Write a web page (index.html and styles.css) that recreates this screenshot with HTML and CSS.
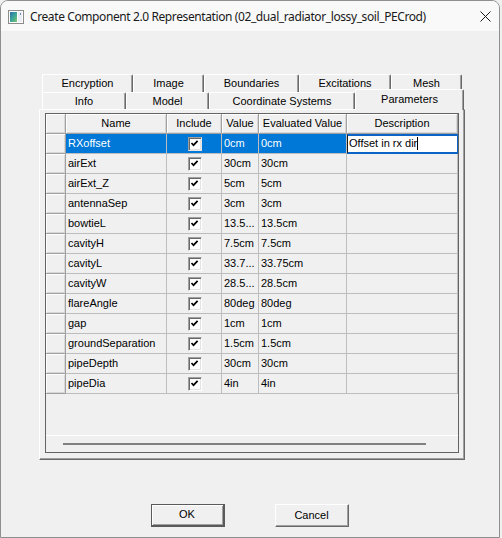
FILE: index.html
```html
<!DOCTYPE html>
<html>
<head>
<meta charset="utf-8">
<link rel="stylesheet" href="styles.css">
</head>
<body>
<div class="window">
  <div class="titlebar">
    <svg class="appicon" width="16" height="14" viewBox="0 0 16 14">
      <defs>
        <linearGradient id="g" x1="0" y1="0" x2="1" y2="1">
          <stop offset="0" stop-color="#2a6fb0"/>
          <stop offset="0.5" stop-color="#3aa59a"/>
          <stop offset="1" stop-color="#7cc46a"/>
        </linearGradient>
      </defs>
      <rect x="0.5" y="0.5" width="15" height="13" fill="#fff" stroke="#8c8c8c"/>
      <rect x="2" y="2" width="7" height="10" fill="url(#g)"/>
      <rect x="10" y="2" width="4" height="10" fill="#e8eef4"/>
      <rect x="12" y="3" width="1" height="2" fill="#6a8fb8"/>
    </svg>
    <span class="title">Create Component 2.0 Representation (02_dual_radiator_lossy_soil_PECrod)</span>
    <svg class="close" width="11" height="11" viewBox="0 0 11 11">
      <path d="M0.5 0.5 L10.5 10.5 M10.5 0.5 L0.5 10.5" stroke="#1a1a1a" stroke-width="1" fill="none"/>
    </svg>
  </div>
  <div class="client">
    <div class="tabctl">
      <div class="tabrow row1">
        <div class="tab w-enc">Encryption</div>
        <div class="tab w-img">Image</div>
        <div class="tab w-bnd">Boundaries</div>
        <div class="tab w-exc">Excitations</div>
        <div class="tab w-mesh">Mesh</div>
      </div>
      <div class="tabrow row2">
        <div class="tab w-info">Info</div>
        <div class="tab w-model">Model</div>
        <div class="tab w-coord">Coordinate Systems</div>
        <div class="tab w-par selected">Parameters</div>
      </div>
      <div class="panel">
        <div class="grid">
          <div class="table">
            <div class="c hd"></div>
            <div class="c hd ctr">Name</div>
            <div class="c hd ctr">Include</div>
            <div class="c hd ctr">Value</div>
            <div class="c hd ctr">Evaluated Value</div>
            <div class="c hd ctr">Description</div>

            <div class="c hd"></div>
            <div class="c sel">RXoffset</div>
            <div class="c sel chk"><span class="cb"><svg width="9" height="9" viewBox="0 0 9 9"><path d="M1.5 4 L3.5 6.2 L7.6 1.8" stroke="#000" stroke-width="1.7" fill="none"/></svg></span></div>
            <div class="c sel">0cm</div>
            <div class="c sel">0cm</div>
            <div class="c edit">Offset in rx dir<span class="caret"></span></div>

            <div class="c hd"></div><div class="c">airExt</div><div class="c chk"><span class="cb"><svg width="9" height="9" viewBox="0 0 9 9"><path d="M1.5 4 L3.5 6.2 L7.6 1.8" stroke="#000" stroke-width="1.7" fill="none"/></svg></span></div><div class="c">30cm</div><div class="c">30cm</div><div class="c"></div>
            <div class="c hd"></div><div class="c">airExt_Z</div><div class="c chk"><span class="cb"><svg width="9" height="9" viewBox="0 0 9 9"><path d="M1.5 4 L3.5 6.2 L7.6 1.8" stroke="#000" stroke-width="1.7" fill="none"/></svg></span></div><div class="c">5cm</div><div class="c">5cm</div><div class="c"></div>
            <div class="c hd"></div><div class="c">antennaSep</div><div class="c chk"><span class="cb"><svg width="9" height="9" viewBox="0 0 9 9"><path d="M1.5 4 L3.5 6.2 L7.6 1.8" stroke="#000" stroke-width="1.7" fill="none"/></svg></span></div><div class="c">3cm</div><div class="c">3cm</div><div class="c"></div>
            <div class="c hd"></div><div class="c">bowtieL</div><div class="c chk"><span class="cb"><svg width="9" height="9" viewBox="0 0 9 9"><path d="M1.5 4 L3.5 6.2 L7.6 1.8" stroke="#000" stroke-width="1.7" fill="none"/></svg></span></div><div class="c">13.5...</div><div class="c">13.5cm</div><div class="c"></div>
            <div class="c hd"></div><div class="c">cavityH</div><div class="c chk"><span class="cb"><svg width="9" height="9" viewBox="0 0 9 9"><path d="M1.5 4 L3.5 6.2 L7.6 1.8" stroke="#000" stroke-width="1.7" fill="none"/></svg></span></div><div class="c">7.5cm</div><div class="c">7.5cm</div><div class="c"></div>
            <div class="c hd"></div><div class="c">cavityL</div><div class="c chk"><span class="cb"><svg width="9" height="9" viewBox="0 0 9 9"><path d="M1.5 4 L3.5 6.2 L7.6 1.8" stroke="#000" stroke-width="1.7" fill="none"/></svg></span></div><div class="c">33.7...</div><div class="c">33.75cm</div><div class="c"></div>
            <div class="c hd"></div><div class="c">cavityW</div><div class="c chk"><span class="cb"><svg width="9" height="9" viewBox="0 0 9 9"><path d="M1.5 4 L3.5 6.2 L7.6 1.8" stroke="#000" stroke-width="1.7" fill="none"/></svg></span></div><div class="c">28.5...</div><div class="c">28.5cm</div><div class="c"></div>
            <div class="c hd"></div><div class="c">flareAngle</div><div class="c chk"><span class="cb"><svg width="9" height="9" viewBox="0 0 9 9"><path d="M1.5 4 L3.5 6.2 L7.6 1.8" stroke="#000" stroke-width="1.7" fill="none"/></svg></span></div><div class="c">80deg</div><div class="c">80deg</div><div class="c"></div>
            <div class="c hd"></div><div class="c">gap</div><div class="c chk"><span class="cb"><svg width="9" height="9" viewBox="0 0 9 9"><path d="M1.5 4 L3.5 6.2 L7.6 1.8" stroke="#000" stroke-width="1.7" fill="none"/></svg></span></div><div class="c">1cm</div><div class="c">1cm</div><div class="c"></div>
            <div class="c hd"></div><div class="c">groundSeparation</div><div class="c chk"><span class="cb"><svg width="9" height="9" viewBox="0 0 9 9"><path d="M1.5 4 L3.5 6.2 L7.6 1.8" stroke="#000" stroke-width="1.7" fill="none"/></svg></span></div><div class="c">1.5cm</div><div class="c">1.5cm</div><div class="c"></div>
            <div class="c hd"></div><div class="c">pipeDepth</div><div class="c chk"><span class="cb"><svg width="9" height="9" viewBox="0 0 9 9"><path d="M1.5 4 L3.5 6.2 L7.6 1.8" stroke="#000" stroke-width="1.7" fill="none"/></svg></span></div><div class="c">30cm</div><div class="c">30cm</div><div class="c"></div>
            <div class="c hd"></div><div class="c">pipeDia</div><div class="c chk"><span class="cb"><svg width="9" height="9" viewBox="0 0 9 9"><path d="M1.5 4 L3.5 6.2 L7.6 1.8" stroke="#000" stroke-width="1.7" fill="none"/></svg></span></div><div class="c">4in</div><div class="c">4in</div><div class="c"></div>
          </div>
          <div class="filler"></div>
          <div class="hscroll"><div class="thumb"></div></div>
        </div>
      </div>
    </div>
    <div class="buttons">
      <div class="btn default"><span>OK</span></div>
      <div class="btn">Cancel</div>
    </div>
  </div>
</div>
</body>
</html>
```
FILE: styles.css
```css
html, body {
  margin: 0;
  padding: 0;
  background: #f0f0f0;
}
body {
  width: 502px;
  height: 538px;
  overflow: hidden;
  font-family: "Liberation Sans", Arial, sans-serif;
  font-size: 11px;
  color: #000;
}
.window {
  box-sizing: border-box;
  width: 500px;
  height: 538px;
  border: 1px solid #8f8f8f;
  border-radius: 8px 8px 0 0;
  background: #f0f0f0;
  overflow: hidden;
}
.titlebar {
  height: 30px;
  display: flex;
  align-items: center;
  padding-left: 7px;
  background: #f9f9f9;
}
.appicon {
  margin-right: 6px;
  margin-top: 1px;
}
.title {
  font-family: "Noto Sans", "Open Sans", sans-serif;
  font-size: 12px;
  color: #1a1a1a;
  letter-spacing: -0.4px;
}
.close {
  margin-left: auto;
  margin-right: 8px;
}
.client {
  padding-top: 43px;
}
.tabctl {
  margin-left: 38px;
  width: 426px;
}
.tabrow {
  display: flex;
  padding-left: 3px;
}
.row1 {
  height: 18px;
}
.row2 {
  height: 17px;
  align-items: flex-end;
}
.tab {
  box-sizing: border-box;
  height: 100%;
  border-top: 1px solid #fff;
  border-left: 1px solid #fff;
  border-right: 1px solid #696969;
  border-top-left-radius: 2px;
  border-top-right-radius: 2px;
  box-shadow: inset -1px 0 0 #a0a0a0;
  background: #f0f0f0;
  text-align: center;
  line-height: 16px;
}
.w-enc { width: 91px; }
.w-img { width: 71px; }
.w-bnd { width: 95px; }
.w-exc { width: 92px; }
.w-mesh { width: 71px; }
.w-info { width: 84px; }
.w-model { width: 83px; }
.w-coord { width: 146px; }
.w-par { width: 109px; }
.tab.selected {
  height: 21px;
  margin-bottom: -1px;
  position: relative;
  z-index: 1;
  line-height: 18px;
  padding-bottom: 2px;
}
.panel {
  box-sizing: border-box;
  width: 426px;
  height: 351px;
  border-top: 1px solid #fff;
  border-left: 1px solid #fff;
  border-right: 1px solid #696969;
  border-bottom: 1px solid #696969;
  box-shadow: inset -1px -1px 0 #a0a0a0;
  padding: 3px 0 0 5px;
}
.grid {
  box-sizing: border-box;
  width: 414px;
  height: 340px;
  border: 1px solid #646464;
  display: flex;
  flex-direction: column;
}
.table {
  display: grid;
  grid-template-columns: 20px 101px 55px 37px 88px 111px;
  grid-auto-rows: 20px;
}
.c {
  box-sizing: border-box;
  border-right: 1px solid #bdbdbd;
  border-bottom: 1px solid #bdbdbd;
  padding-left: 2px;
  line-height: 19px;
  white-space: nowrap;
  overflow: hidden;
}
.hd {
  border-right: 1px solid #a0a0a0;
  border-bottom: 1px solid #a0a0a0;
  box-shadow: inset 1px 1px 0 #fff, inset -1px -1px 0 #d8d8d8;
  padding-left: 0;
}
.ctr {
  text-align: center;
}
.sel {
  background: #0078d7;
  color: #fff;
}
.chk {
  display: flex;
  align-items: center;
  justify-content: center;
  padding-left: 0;
}
.cb {
  box-sizing: border-box;
  width: 14px;
  height: 14px;
  background: #fff;
  border-top: 1px solid #a0a0a0;
  border-left: 1px solid #a0a0a0;
  border-right: 1px solid #fff;
  border-bottom: 1px solid #fff;
  box-shadow: inset 1px 1px 0 #696969, inset -1px -1px 0 #e3e3e3;
  display: flex;
  align-items: center;
  justify-content: center;
  margin-left: 1px;
}
.sel .cb {
  border-right-color: #e8e8e8;
  border-bottom-color: #e8e8e8;
}
.edit {
  background: #fff;
  border-top: 2px solid #0a64c8;
  border-bottom: 2px solid #0a64c8;
  border-left: 1px solid #1a1a1a;
  border-right: 1px solid #0a64c8;
  line-height: 15px;
  padding-left: 1px;
}
.caret {
  display: inline-block;
  width: 1px;
  height: 13px;
  background: #000;
  vertical-align: -3px;
}
.filler {
  flex: 1;
}
.hscroll {
  box-sizing: border-box;
  height: 17px;
  border-top: 1px solid #fff;
  padding: 7px 0 0 17px;
}
.thumb {
  width: 363px;
  height: 2px;
  background: #808080;
}
.buttons {
  display: flex;
  justify-content: center;
  gap: 50px;
  margin-top: 44px;
  padding-right: 1px;
}
.btn {
  box-sizing: border-box;
  width: 74px;
  height: 23px;
  border-top: 1px solid #fff;
  border-left: 1px solid #fff;
  border-right: 1px solid #696969;
  border-bottom: 1px solid #696969;
  box-shadow: inset -1px -1px 0 #a0a0a0;
  background: #f0f0f0;
  text-align: center;
  line-height: 20px;
}
.btn.default {
  border: 1px solid #5a5a5a;
  border-right-width: 2px;
  border-bottom-width: 2px;
  box-shadow: inset 1px 1px 0 #fff, inset -1px -1px 0 #a0a0a0;
  line-height: 19px;
}
```
